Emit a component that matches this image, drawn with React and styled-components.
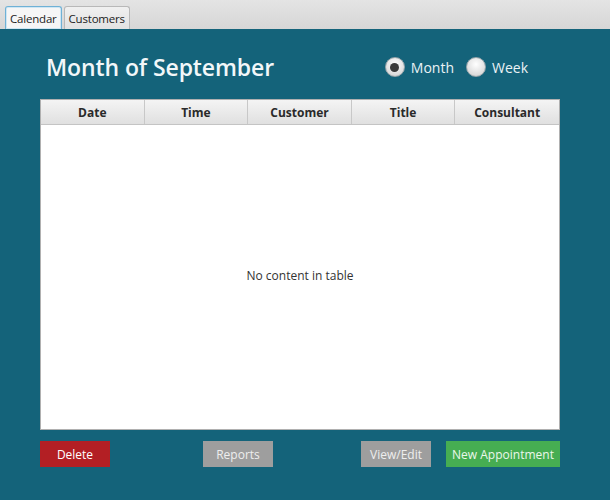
import React, { useState } from 'react';
import styled, { createGlobalStyle } from 'styled-components';

const GlobalStyle = createGlobalStyle`
  html, body {
    margin: 0;
    padding: 0;
    height: 100%;
    font-family: "Open Sans", "Noto Sans", sans-serif;
  }
  #root {
    height: 100%;
  }
`;

const Window = styled.div`
  width: 610px;
  height: 500px;
  display: flex;
  flex-direction: column;
  overflow: hidden;
`;

const TabBar = styled.div`
  height: 29px;
  box-sizing: border-box;
  padding: 6px 0 0 5px;
  display: flex;
  align-items: flex-end;
  gap: 2px;
  background: linear-gradient(#e4e4e4, #d6d6d6);
`;

const Tab = styled.div`
  height: 23px;
  box-sizing: border-box;
  padding: 0 4px;
  display: flex;
  align-items: center;
  font-size: 11.5px;
  letter-spacing: -0.2px;
  color: #222;
  border-radius: 3px 3px 0 0;
  border: 1px solid ${p => (p.active ? '#6fb1d6' : '#b8b8b8')};
  border-bottom: none;
  background: ${p => (p.active ? '#f6f6f6' : 'linear-gradient(#f0f0f0, #e2e2e2)')};
  box-shadow: ${p => (p.active ? 'inset 0 0 0 1px #cfe6f3' : 'none')};
  cursor: default;
`;

const Main = styled.div`
  flex: 1;
  background: #14637a;
  padding: 0 50px 0 40px;
  display: flex;
  flex-direction: column;
`;

const HeaderRow = styled.div`
  height: 70px;
  box-sizing: border-box;
  padding: 6px 0 0 6px;
  display: flex;
  align-items: center;
  justify-content: space-between;
`;

const Title = styled.h1`
  margin: 0;
  font-size: 23px;
  font-weight: 600;
  color: #f2f7f9;
  letter-spacing: -0.1px;
`;

const RadioGroup = styled.div`
  display: flex;
  gap: 12px;
  padding-right: 32px;
`;

const RadioLabel = styled.label`
  display: flex;
  align-items: center;
  gap: 6px;
  font-size: 14px;
  color: #eaf2f5;
  cursor: default;
`;

const RadioCircle = styled.span`
  width: 20px;
  height: 20px;
  border-radius: 50%;
  box-sizing: border-box;
  background: radial-gradient(circle at 50% 35%, #ffffff, #dcdcdc 70%, #c4c4c4);
  border: 1px solid #9aa6ab;
  display: flex;
  align-items: center;
  justify-content: center;
  &::after {
    content: '';
    width: 9px;
    height: 9px;
    border-radius: 50%;
    background: #3a3a3a;
    display: ${p => (p.checked ? 'block' : 'none')};
  }
`;

const Table = styled.div`
  height: 331px;
  box-sizing: border-box;
  background: #fff;
  border: 1px solid #b0b0b0;
  display: flex;
  flex-direction: column;
`;

const HeadRow = styled.div`
  height: 24px;
  display: grid;
  grid-template-columns: repeat(5, 1fr);
  border-bottom: 1px solid #c4c4c4;
  background: linear-gradient(#f4f4f4, #e0e0e0);
`;

const HeadCell = styled.div`
  display: flex;
  align-items: center;
  justify-content: center;
  font-size: 12px;
  font-weight: 700;
  color: #2a2a2a;
  border-right: 1px solid #c8c8c8;
  &:last-child {
    border-right: none;
  }
`;

const Empty = styled.div`
  flex: 1;
  display: flex;
  align-items: center;
  justify-content: center;
  font-size: 12px;
  color: #333;
  padding-bottom: 4px;
`;

const ButtonRow = styled.div`
  margin-top: 11px;
  display: flex;
  align-items: center;
`;

const Button = styled.button`
  height: 26px;
  width: ${p => p.w || 70}px;
  padding: 0;
  border: none;
  border-radius: 0;
  white-space: nowrap;
  font-family: inherit;
  font-size: 12px;
  color: ${p => p.fg || '#fff'};
  background: ${p => p.bg};
  margin-left: ${p => p.offset || 0}px;
  cursor: default;
`;

const columns = ['Date', 'Time', 'Customer', 'Title', 'Consultant'];

export default function App() {
  const [tab, setTab] = useState('calendar');
  const [view, setView] = useState('month');

  return (
    <Window>
      <GlobalStyle />
      <TabBar>
        <Tab active={tab === 'calendar'} onClick={() => setTab('calendar')}>Calendar</Tab>
        <Tab active={tab === 'customers'} onClick={() => setTab('customers')}>Customers</Tab>
      </TabBar>
      <Main>
        <HeaderRow>
          <Title>Month of September</Title>
          <RadioGroup>
            <RadioLabel onClick={() => setView('month')}>
              <RadioCircle checked={view === 'month'} />
              Month
            </RadioLabel>
            <RadioLabel onClick={() => setView('week')}>
              <RadioCircle checked={view === 'week'} />
              Week
            </RadioLabel>
          </RadioGroup>
        </HeaderRow>
        <Table>
          <HeadRow>
            {columns.map(c => <HeadCell key={c}>{c}</HeadCell>)}
          </HeadRow>
          <Empty>No content in table</Empty>
        </Table>
        <ButtonRow>
          <Button bg="#b31f24">Delete</Button>
          <Button bg="#9e9e9e" fg="#eeeeee" offset={93}>Reports</Button>
          <Button bg="#9e9e9e" fg="#eeeeee" offset={88}>View/Edit</Button>
          <Button bg="#46ad52" fg="#eaf7ea" offset={15} w={114}>New Appointment</Button>
        </ButtonRow>
      </Main>
    </Window>
  );
}
